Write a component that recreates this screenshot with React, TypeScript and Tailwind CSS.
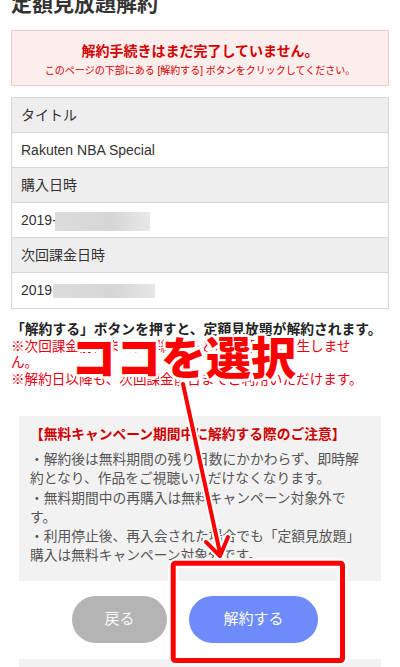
import type { ReactNode } from 'react';

// 表の行（ラベル → 値）
const info: { label: string; value: ReactNode }[] = [
  { label: 'タイトル', value: 'Rakuten NBA Special' },
  {
    label: '購入日時',
    value: (
      <>
        2019-
        <span className="-ml-[2px] mt-[2px] inline-block h-[19px] w-[95px] bg-[linear-gradient(90deg,#dcdcdc,#d6d6d6_60%,#e8e8e8)]" />
      </>
    ),
  },
  {
    label: '次回課金日時',
    value: (
      <>
        2019-
        <span className="-ml-[4px] inline-block h-[14px] w-[102px] bg-[linear-gradient(90deg,#dcdcdc,#d6d6d6_60%,#e6e6e6)]" />
      </>
    ),
  },
];

function Annotation() {
  return (
    <div className="pointer-events-none absolute inset-0">
      <svg className="absolute inset-0" width="400" height="667" viewBox="0 0 400 667" fill="none">
        <g stroke="#ffffff" strokeWidth="8" strokeLinecap="round" strokeLinejoin="round">
          <path d="M183 384 L220 553" />
          <path d="M206 542 L220 556 L228 537" />
          <rect x="173.2" y="563.2" width="169.3" height="97.3" rx="3" strokeWidth="10" />
        </g>
        <g stroke="#ff0000" strokeLinecap="round" strokeLinejoin="round">
          <path d="M183 384 L220 553" strokeWidth="4" />
          <path d="M206 542 L220 556 L228 537" strokeWidth="4" />
          <rect x="173.2" y="563.2" width="169.3" height="97.3" rx="2" strokeWidth="5" />
        </g>
      </svg>
      <span className="absolute left-[71px] top-[333px] whitespace-nowrap font-['Noto_Sans_CJK_JP',sans-serif] text-[45px] leading-none font-black text-[#ff0000] [text-shadow:3px_0_0_#fff,-3px_0_0_#fff,0_3px_0_#fff,0_-3px_0_#fff,2px_2px_0_#fff,-2px_-2px_0_#fff,2px_-2px_0_#fff,-2px_2px_0_#fff]">
        ココを選択
      </span>
    </div>
  );
}

export default function App() {
  return (
    <div className="relative h-[667px] w-[400px] overflow-hidden bg-white font-['Liberation_Sans','Noto_Sans_CJK_JP',sans-serif] text-[#333]">
      <div className="px-[11px]">
        <h1 className="-mt-[7px] text-[21px] leading-[21px] font-semibold text-[#333]">定額見放題解約</h1>

        <div className="mt-[16px] flex h-[56px] flex-col items-center border border-[#f6c8c8] bg-[#fdeeee] pt-[10px] text-[#d40000]">
          <p className="text-[14px] leading-[20px] font-bold">解約手続きはまだ完了していません。</p>
          <p className="mt-[3px] text-[10px] leading-[14px]">このページの下部にある [解約する] ボタンをクリックしてください。</p>
        </div>

        <div className="mt-[11px] border border-[#d6d6d6]">
          {info.map((row, i) => (
            <div key={row.label}>
              <div className="flex h-[35px] items-center border-b border-[#d6d6d6] bg-[#eeeeee] pl-[9px] text-[14px]">
                {row.label}
              </div>
              <div
                className={`flex h-[35px] items-center bg-white pl-[9px] text-[14px] ${
                  i < info.length - 1 ? 'border-b border-[#d6d6d6]' : ''
                }`}
              >
                {row.value}
              </div>
            </div>
          ))}
        </div>

        <p className="mt-[13px] text-[13.8px] leading-[16.5px] font-bold text-[#222]">
          「解約する」ボタンを押すと、定額見放題が解約されます。
        </p>
        <div className="w-[358px] text-[13.6px] leading-[16.5px] text-[#e60012]">
          <p>※次回課金前日までに解約すると次回課金は発生しません。</p>
          <p>※解約日以降も、次回課金前日までご利用いただけます。</p>
        </div>

        <div className="mx-[8px] mt-[28px] bg-[#f2f2f2] px-[11px] pt-[9px] pb-[15px]">
          <p className="text-[13.75px] leading-[20px] font-bold text-[#cc0000]">
            【無料キャンペーン期間中に解約する際のご注意】
          </p>
          <div className="mt-[5px] text-[13.75px] leading-[19.3px] text-[#555]">
            <p>・解約後は無料期間の残り日数にかかわらず、即時解約となり、作品をご視聴いただけなくなります。</p>
            <p>・無料期間中の再購入は無料キャンペーン対象外です。</p>
            <p>・利用停止後、再入会された場合でも「定額見放題」購入は無料キャンペーン対象外です。</p>
          </div>
        </div>

        <div className="mt-[15px] flex justify-center gap-[22px] pr-[10px]">
          <button className="h-[47px] w-[95px] rounded-full bg-[#b4b4b4] text-[15px] text-[#f8f8f8]">戻る</button>
          <button className="h-[47px] w-[129px] rounded-full bg-[#6e8bfb] text-[15px] text-white">解約する</button>
        </div>

        <div className="mx-[8px] mt-[16px] h-[40px] bg-[#f2f2f2]" />
      </div>

      <Annotation />
    </div>
  );
}
